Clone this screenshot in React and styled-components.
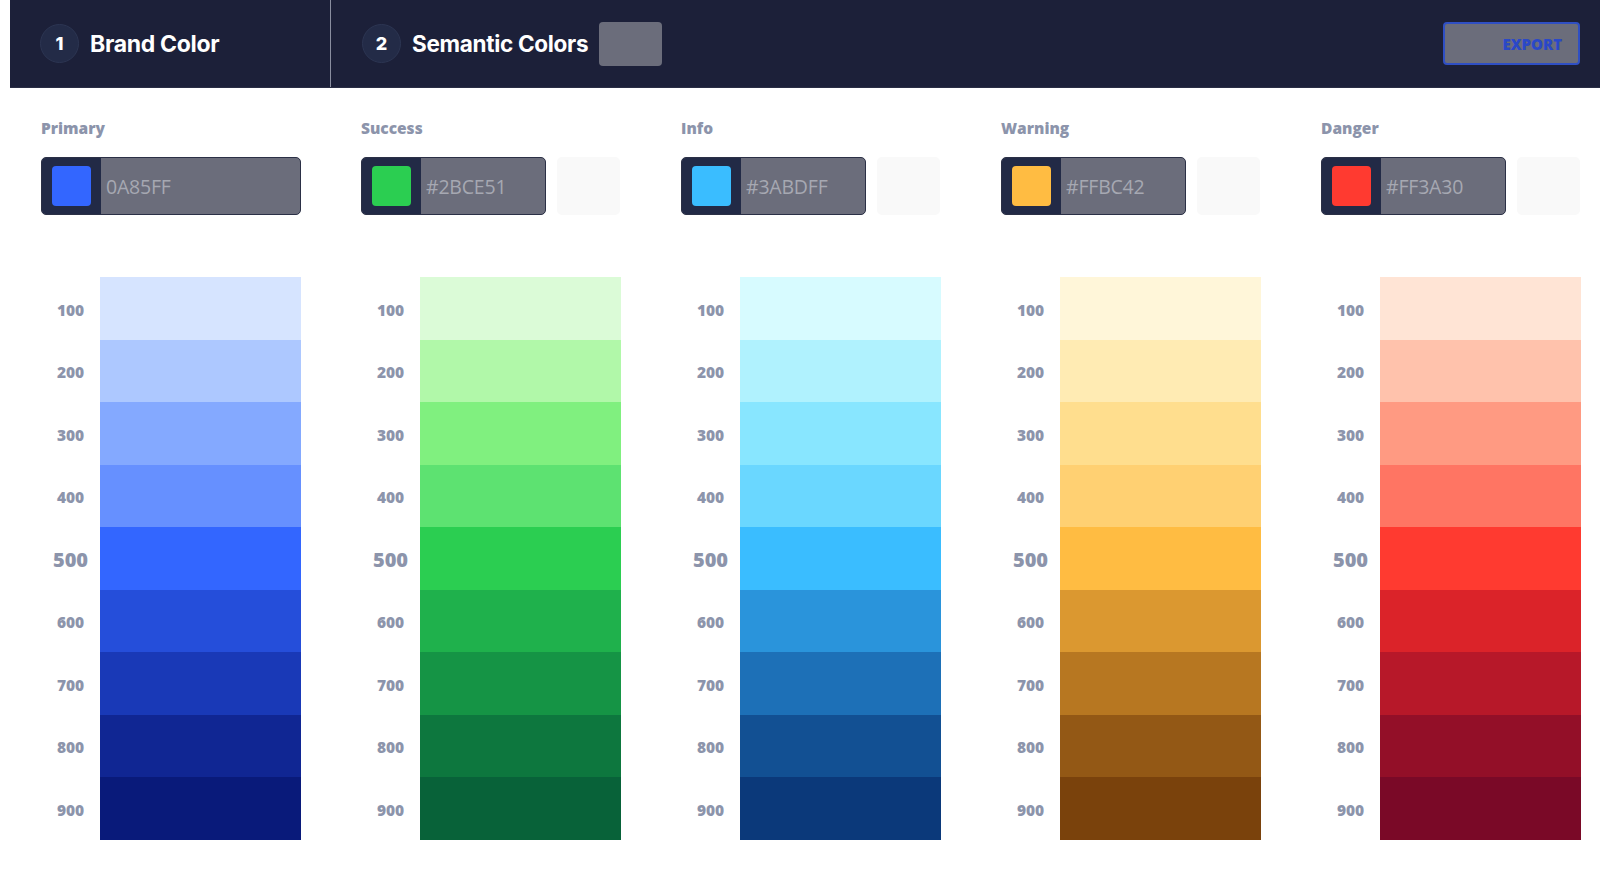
import React from "react";
import styled, { createGlobalStyle } from "styled-components";

const GlobalStyle = createGlobalStyle`
  html, body {
    margin: 0;
    padding: 0;
    background: #ffffff;
  }
  body {
    font-family: "Open Sans", "Liberation Sans", sans-serif;
  }
  * { box-sizing: border-box; }
`;

const palettes = [
  {
    name: "Primary",
    value: "0A85FF",
    extra: false,
    shades: ["#d6e4ff", "#adc8ff", "#84a9ff", "#6690ff", "#3366ff", "#254eda", "#1939b7", "#102693", "#091a7a"],
  },
  {
    name: "Success",
    value: "#2BCE51",
    extra: true,
    shades: ["#dbfbd7", "#b1f8a9", "#80f07f", "#5de271", "#2bce51", "#1fb14c", "#159445", "#0d773e", "#086239"],
  },
  {
    name: "Info",
    value: "#3ABDFF",
    extra: true,
    shades: ["#d7fbff", "#b0f2fe", "#88e6ff", "#6ad7ff", "#3abdff", "#2a94db", "#1d70b7", "#125093", "#0b397a"],
  },
  {
    name: "Warning",
    value: "#FFBC42",
    extra: true,
    shades: ["#fff6d9", "#ffebb3", "#ffde8e", "#ffd072", "#ffbc42", "#db9830", "#b77721", "#935815", "#7a420c"],
  },
  {
    name: "Danger",
    value: "#FF3A30",
    extra: true,
    shades: ["#ffe4d5", "#ffc2ac", "#ff9a82", "#ff7563", "#ff3a30", "#db2329", "#b71829", "#930f28", "#7a0927"],
  },
];

const steps = [100, 200, 300, 400, 500, 600, 700, 800, 900];

// Top header bar
const Header = styled.header`
  display: flex;
  align-items: center;
  height: 88px;
  margin-left: 10px;
  background: #1c2039;
  border-bottom: 1px solid #2a2e45;
`;

const Step = styled.div`
  display: flex;
  align-items: center;
  height: 100%;
  width: ${({ $width }) => $width || "auto"};
  padding-left: ${({ $pad }) => $pad || "30px"};
  border-right: ${({ $divider }) => ($divider ? "1.5px solid #8a8ea0" : "none")};
`;

const StepNumber = styled.div`
  width: 39px;
  height: 39px;
  border-radius: 50%;
  background: #232b47;
  border: 1px solid #2c3552;
  color: #ffffff;
  display: flex;
  align-items: center;
  justify-content: center;
  font-family: "Inter", "Lato", sans-serif;
  font-weight: 800;
  font-size: 18px;
`;

const StepTitle = styled.div`
  margin-left: 11px;
  color: #ffffff;
  font-family: "Inter", "Lato", sans-serif;
  font-weight: 700;
  font-size: ${({ $size }) => $size || "23px"};
  letter-spacing: -0.3px;
`;

const GreyChip = styled.div`
  width: 63px;
  height: 44px;
  margin-left: 11px;
  border-radius: 4px;
  background: #6b6d7b;
`;

const Spacer = styled.div`
  flex: 1;
`;

const ExportButton = styled.button`
  width: 137px;
  height: 43px;
  margin-right: 20px;
  border-radius: 4px;
  border: 2px solid #2f4fc4;
  background: #6b6d7b;
  color: #2a48c8;
  font-family: "Open Sans", sans-serif;
  font-weight: 800;
  font-size: 15px;
  text-align: right;
  padding: 0 16px 0 0;
`;

// Palette grid
const Grid = styled.main`
  display: grid;
  grid-template-columns: repeat(5, 260px);
  column-gap: 60px;
  padding: 30px 0 0 41px;
`;

const Column = styled.section`
  display: flex;
  flex-direction: column;
`;

const Label = styled.div`
  color: #8c94ab;
  font-weight: 800;
  font-size: 15.5px;
  line-height: 20px;
  height: 20px;
`;

const InputRow = styled.div`
  display: flex;
  gap: 11px;
  margin-top: 19px;
`;

const ColorInput = styled.div`
  display: flex;
  width: ${({ $full }) => ($full ? "260px" : "185px")};
  height: 58px;
  border: 1.5px solid #2b3046;
  border-radius: 5px;
  overflow: hidden;
  background: #6b6d7b;
`;

const PickerWell = styled.div`
  width: 59px;
  background: #222a46;
  display: flex;
  align-items: center;
  justify-content: center;
`;

const PickerSwatch = styled.div`
  width: 39px;
  height: 40px;
  border-radius: 4px;
  background: ${({ $color }) => $color};
`;

const HexText = styled.div`
  display: flex;
  align-items: center;
  padding-left: 5px;
  color: #a6a8b2;
  font-size: 19.5px;
  letter-spacing: -0.2px;
`;

const GhostBox = styled.div`
  width: 63px;
  height: 58px;
  border-radius: 5px;
  background: #f9f9f9;
`;

const Scale = styled.div`
  display: flex;
  flex-direction: column;
  margin-top: 62px;
`;

const ScaleRow = styled.div`
  display: flex;
  align-items: center;
  height: 62.5px;
`;

const StepLabel = styled.div`
  width: 59px;
  padding-top: 3px;
  text-align: center;
  color: #8c94ab;
  font-weight: 800;
  font-size: ${({ $big }) => ($big ? "20px" : "15.5px")};
`;

const Shade = styled.div`
  flex: 1;
  height: 100%;
  background: ${({ $color }) => $color};
`;

const Palette = ({ palette }) => (
  <Column>
    <Label>{palette.name}</Label>
    <InputRow>
      <ColorInput $full={!palette.extra}>
        <PickerWell>
          <PickerSwatch $color={palette.shades[4]} />
        </PickerWell>
        <HexText>{palette.value}</HexText>
      </ColorInput>
      {palette.extra && <GhostBox />}
    </InputRow>
    <Scale>
      {steps.map((s, i) => (
        <ScaleRow key={s}>
          <StepLabel $big={s === 500}>{s}</StepLabel>
          <Shade $color={palette.shades[i]} />
        </ScaleRow>
      ))}
    </Scale>
  </Column>
);

export default function App() {
  return (
    <>
      <GlobalStyle />
      <Header>
        <Step $width="321px" $divider>
          <StepNumber>1</StepNumber>
          <StepTitle>Brand Color</StepTitle>
        </Step>
        <Step $pad="31px">
          <StepNumber>2</StepNumber>
          <StepTitle $size="22.5px">Semantic Colors</StepTitle>
          <GreyChip />
        </Step>
        <Spacer />
        <ExportButton>EXPORT</ExportButton>
      </Header>
      <Grid>
        {palettes.map((p) => (
          <Palette key={p.name} palette={p} />
        ))}
      </Grid>
    </>
  );
}
